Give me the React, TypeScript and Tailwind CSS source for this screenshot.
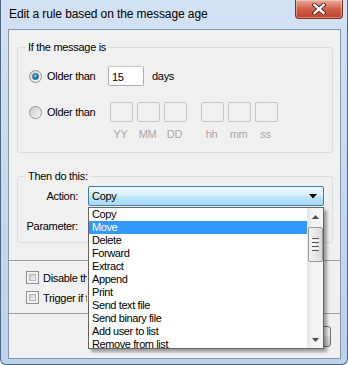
import React from "react";

function Radio({ checked }: { checked?: boolean }) {
  return (
    <div className="w-[13px] h-[13px] rounded-full border border-[#8e8f8f] bg-gradient-to-br from-[#d4d4d4] to-[#f9f9f9] flex items-center justify-center shrink-0">
      {checked ? (
        <div className="w-[7px] h-[7px] rounded-full bg-[radial-gradient(circle_at_40%_35%,#9fe1ff_0%,#1c8ed6_45%,#0b4f8a_100%)] border border-[#1a5a8a]" />
      ) : (
        <div className="w-[9px] h-[9px] rounded-full bg-gradient-to-br from-[#cbcbcb] to-[#f4f4f4]" />
      )}
    </div>
  );
}

function Check() {
  return (
    <div className="w-[13px] h-[13px] border border-[#8e8f8f] bg-[#f4f4f4] p-[2px] shrink-0">
      <div className="w-full h-full bg-gradient-to-br from-[#cbcbcb] to-[#f6f6f6] border border-[#b8b8b8]" />
    </div>
  );
}

function Box() {
  return <div className="w-[23px] h-[20px] border border-[#c6c6c6] rounded-[2px] bg-[#f0f0f0]" />;
}

function Lbl({ t }: { t: string }) {
  return <div className="w-[23px] text-center text-[#a8a8a8] leading-[12px]">{t}</div>;
}

export default function App() {
  const items = [
    "Copy",
    "Move",
    "Delete",
    "Forward",
    "Extract",
    "Append",
    "Print",
    "Send text file",
    "Send binary file",
    "Add user to list",
    "Remove from list",
  ];
  return (
    <div className="relative w-[348px] h-[365px] overflow-hidden rounded-b-[6px] border-l border-r border-b border-[#4f6885] bg-gradient-to-b from-[#d2e2f3] via-[#c6d9ee] to-[#bcd2ea] pl-[7px] pr-[6px] flex flex-col font-['Liberation_Sans',Arial,sans-serif] text-[11px] text-black">
      {/* title bar */}
      <div className="h-[29px] flex items-start justify-between shrink-0">
        <div className="pt-[7px] pl-[1px] text-[12px] leading-[15px] text-black tracking-[-0.1px]">
          Edit a rule based on the message age
        </div>
        <div className="mr-[-2px] w-[48px] h-[19px] rounded-b-[4px] border border-t-0 border-[#7a3529] bg-gradient-to-b from-[#e9a999] via-[#d0604a] to-[#c4412b] flex items-center justify-center shadow-[inset_0_0_0_1px_rgba(255,255,255,0.35)]">
          <svg width="14" height="12" viewBox="0 0 14 12">
            <path d="M2.5 2 L11.5 10 M11.5 2 L2.5 10" stroke="#4a1a12" strokeWidth="4.2" strokeLinecap="square" />
            <path d="M2.5 2 L11.5 10 M11.5 2 L2.5 10" stroke="#ffffff" strokeWidth="2.4" strokeLinecap="square" />
          </svg>
        </div>
      </div>

      {/* client area */}
      <div className="h-[330px] border border-[#8597ad] bg-[#f0f0f0] flex flex-col shrink-0 tracking-[-0.3px]">
        {/* group 1 */}
        <div className="relative mt-[17px] ml-[8px] mr-[7px] h-[106px] border border-[#d5dfe5] rounded-[3px]">
          <span className="absolute left-[8px] top-[-8px] px-[2px] bg-[#f0f0f0] leading-[14px]">If the message is</span>
          <div className="mt-[18px] pl-[11px] flex items-center h-[20px]">
            <Radio checked />
            <div className="ml-[5px] w-[61px] pt-[1px]">Older than</div>
            <div className="w-[36px] h-[20px] border border-[#abadb3] border-t-[#c5c7cc] rounded-[2px] bg-white pl-[3px] leading-[18px] pt-[1px]">15</div>
            <div className="ml-[8px] pt-[1px]">days</div>
          </div>
          <div className="mt-[16px] pl-[11px] flex items-center h-[20px]">
            <Radio />
            <div className="ml-[5px] w-[63px] pt-[1px]">Older than</div>
            <div className="flex gap-[4px]">
              <Box />
              <Box />
              <Box />
            </div>
            <div className="flex gap-[4px] ml-[14px]">
              <Box />
              <Box />
              <Box />
            </div>
          </div>
          <div className="mt-[6px] pl-[91px] flex">
            <div className="flex gap-[4px]">
              <Lbl t="YY" />
              <Lbl t="MM" />
              <Lbl t="DD" />
            </div>
            <div className="flex gap-[4px] ml-[14px]">
              <Lbl t="hh" />
              <Lbl t="mm" />
              <Lbl t="ss" />
            </div>
          </div>
        </div>

        {/* group 2 */}
        <div className="relative mt-[23px] ml-[8px] mr-[7px] h-[67px] border border-[#d5dfe5] rounded-[3px]">
          <span className="absolute left-[8px] top-[-8px] px-[2px] bg-[#f0f0f0] leading-[14px]">Then do this:</span>
          <div className="mt-[9px] flex items-center h-[20px]">
            <div className="w-[60px] text-right pt-[1px]">Action:</div>
            <div className="ml-[10px] w-[236px] h-[20px] border border-[#3c7fb1] rounded-[2px] bg-[linear-gradient(to_bottom,#eaf6fd_0%,#d9f0fc_50%,#bee6fd_51%,#a7d9f5_100%)] flex items-center justify-between pl-[3px] pr-[6px]">
              <span className="pt-[1px]">Copy</span>
              <svg width="8" height="5" viewBox="0 0 8 5">
                <path d="M0 0 H8 L4 4.5 Z" fill="#000" />
              </svg>
            </div>
          </div>
          <div className="mt-[10px] flex items-center h-[20px]">
            <div className="w-[60px] text-right pt-[1px]">Parameter:</div>
            <div className="ml-[10px] w-[236px] h-[20px] border border-[#abadb3] rounded-[2px] bg-white" />
          </div>
        </div>

        <div className="mt-[17px] h-px bg-[#a0a0a0] shrink-0" />

        <div className="mt-[10px] ml-[17px] flex items-center h-[13px]">
          <Check />
          <span className="ml-[4px] pt-[1px] w-[44px] overflow-hidden whitespace-nowrap">Disable this rule</span>
        </div>
        <div className="mt-[7px] ml-[17px] flex items-center h-[13px]">
          <Check />
          <span className="ml-[4px] pt-[1px] w-[44px] overflow-hidden whitespace-nowrap">Trigger if the message is unread</span>
        </div>

        <div className="mt-[9px] h-px bg-[#a0a0a0] shrink-0" />

        <div className="mt-[12px] mr-[9px] flex justify-end gap-[5px]">
          <div className="w-[75px] h-[21px] rounded-[3px] border border-[#707070] bg-[linear-gradient(to_bottom,#f2f2f2_0%,#ebebeb_50%,#dddddd_51%,#cfcfcf_100%)]" />
          <div className="w-[75px] h-[21px] rounded-[3px] border border-[#707070] bg-[linear-gradient(to_bottom,#f2f2f2_0%,#ebebeb_50%,#dddddd_51%,#cfcfcf_100%)]" />
        </div>
      </div>

      {/* dropdown list overlay */}
      <div className="absolute left-[87px] top-[207px] w-[236px] h-[142px] border border-[#646464] bg-white flex shadow-[3px_3px_3px_rgba(0,0,0,0.35)] overflow-hidden">
        <div className="w-[218px] tracking-[-0.4px]">
          {items.map((it) => (
            <div
              key={it}
              className={
                it === "Move"
                  ? "h-[13px] leading-[13px] pl-[3px] bg-[#3399ff] text-white"
                  : "h-[13px] leading-[13px] pl-[3px]"
              }
            >
              {it}
            </div>
          ))}
        </div>
        <div className="w-[16px] h-full bg-[linear-gradient(to_right,#e6e6e6,#f4f4f4_40%,#f4f4f4)] flex flex-col items-center">
          <div className="h-[17px] w-full flex items-center justify-center">
            <svg width="7" height="4" viewBox="0 0 7 4">
              <path d="M0 4 L3.5 0 L7 4 Z" fill="#4d4d4d" />
            </svg>
          </div>
          <div className="mt-[2px] w-[15px] h-[35px] rounded-[2px] border border-[#979797] bg-[linear-gradient(to_right,#f3f3f3,#e8e8e8_50%,#d9d9d9)] flex flex-col items-center justify-center gap-[1px]">
            <div className="w-[7px] h-px bg-[#5a5a5a]" />
            <div className="w-[7px] h-px bg-[#ffffff]" />
            <div className="w-[7px] h-px bg-[#5a5a5a]" />
            <div className="w-[7px] h-px bg-[#ffffff]" />
            <div className="w-[7px] h-px bg-[#5a5a5a]" />
            <div className="w-[7px] h-px bg-[#ffffff]" />
            <div className="w-[7px] h-px bg-[#5a5a5a]" />
          </div>
          <div className="flex-1" />
          <div className="h-[17px] w-full flex items-center justify-center">
            <svg width="7" height="4" viewBox="0 0 7 4">
              <path d="M0 0 L7 0 L3.5 4 Z" fill="#4d4d4d" />
            </svg>
          </div>
        </div>
      </div>
    </div>
  );
}
